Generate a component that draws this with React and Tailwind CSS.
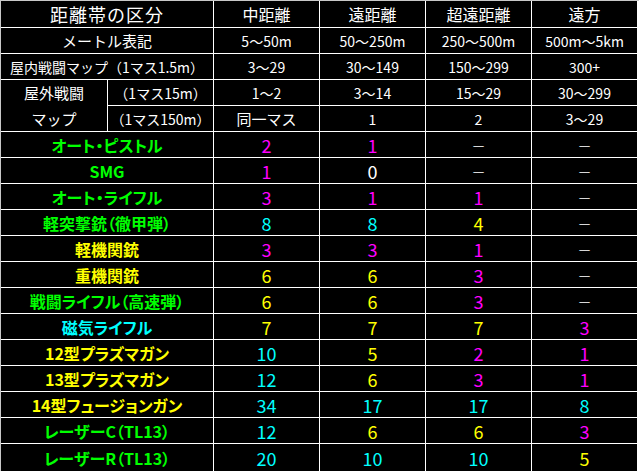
const G = 'text-[#00ff00]';
const Y = 'text-[#ffff00]';
const M = 'text-[#ff00ff]';
const C = 'text-[#00ffff]';
const W = 'text-white';

const weapons = [
  { name: 'オート・ピストル', color: G, vals: [['2', M], ['1', M], ['—', W], ['—', W]] },
  { name: 'SMG', color: G, vals: [['1', M], ['0', W], ['—', W], ['—', W]] },
  { name: 'オート・ライフル', color: G, vals: [['3', M], ['1', M], ['1', M], ['—', W]] },
  { name: '軽突撃銃（徹甲弾）', color: G, vals: [['8', C], ['8', C], ['4', Y], ['—', W]] },
  { name: '軽機関銃', color: Y, vals: [['3', M], ['3', M], ['1', M], ['—', W]] },
  { name: '重機関銃', color: Y, vals: [['6', Y], ['6', Y], ['3', M], ['—', W]] },
  { name: '戦闘ライフル（高速弾）', color: G, vals: [['6', Y], ['6', Y], ['3', M], ['—', W]] },
  { name: '磁気ライフル', color: C, vals: [['7', Y], ['7', Y], ['7', Y], ['3', M]] },
  { name: '12型プラズマガン', color: Y, vals: [['10', C], ['5', Y], ['2', M], ['1', M]] },
  { name: '13型プラズマガン', color: Y, vals: [['12', C], ['6', Y], ['3', M], ['1', M]] },
  { name: '14型フュージョンガン', color: Y, vals: [['34', C], ['17', C], ['17', C], ['8', C]] },
  { name: 'レーザーC（TL13）', color: G, vals: [['12', C], ['6', Y], ['6', Y], ['3', M]] },
  { name: 'レーザーR（TL13）', color: G, vals: [['20', C], ['10', C], ['10', C], ['5', Y]] },
];

function Cell({ className = '', children }) {
  return (
    <div className={'bg-black flex items-center justify-center leading-none whitespace-nowrap ' + className}>
      {children}
    </div>
  );
}

export default function App() {
  return (
    <div
      className="w-[639px] h-[471px] bg-white border-t border-l border-[#c8c8c8] overflow-hidden"
      style={{ fontFamily: '"Noto Sans CJK JP", "Noto Sans", sans-serif' }}
    >
      <div className="w-[636px] grid grid-cols-[106px_105px_105px_105px_105px_105px] grid-rows-[26px_repeat(16,25px)_27px] gap-px">
        {/* header */}
        <Cell className="col-span-2 text-[18px] text-white tracking-[1px]">距離帯の区分</Cell>
        <Cell className="text-[16px] text-white">中距離</Cell>
        <Cell className="text-[16px] text-white">遠距離</Cell>
        <Cell className="text-[16px] text-white">超遠距離</Cell>
        <Cell className="text-[16px] text-white">遠方</Cell>

        <Cell className="col-span-2 text-[15px] text-white">メートル表記</Cell>
        <Cell className="text-[14px] text-white">5〜50m</Cell>
        <Cell className="text-[14px] text-white">50〜250m</Cell>
        <Cell className="text-[14px] text-white">250〜500m</Cell>
        <Cell className="text-[14px] text-white">500m〜5km</Cell>

        <Cell className="col-span-2 text-[14px] text-white">屋内戦闘マップ（1マス1.5m）</Cell>
        <Cell className="text-[14px] text-white">3〜29</Cell>
        <Cell className="text-[14px] text-white">30〜149</Cell>
        <Cell className="text-[14px] text-white">150〜299</Cell>
        <Cell className="text-[14px] text-white">300+</Cell>

        <div className="row-span-2 bg-black flex flex-col text-[15px] text-white leading-none">
          <div className="h-[25px] flex items-center justify-center">屋外戦闘</div>
          <div className="h-px" />
          <div className="h-[25px] flex items-center justify-center">マップ</div>
        </div>
        <Cell className="text-[14px] text-white">（1マス15m）</Cell>
        <Cell className="text-[14px] text-white">1〜2</Cell>
        <Cell className="text-[14px] text-white">3〜14</Cell>
        <Cell className="text-[14px] text-white">15〜29</Cell>
        <Cell className="text-[14px] text-white">30〜299</Cell>

        <Cell className="text-[14px] text-white">（1マス150m）</Cell>
        <Cell className="text-[15px] text-white">同一マス</Cell>
        <Cell className="text-[14px] text-white">1</Cell>
        <Cell className="text-[14px] text-white">2</Cell>
        <Cell className="text-[14px] text-white">3〜29</Cell>

        {weapons.map((w) => (
          <div key={w.name} className="contents">
            <Cell className={'col-span-2 text-[16px] font-bold [font-feature-settings:"palt"] ' + w.color}>
              {w.name}
            </Cell>
            {w.vals.map(([v, c], i) => (
              <Cell key={i} className={(v === '—' ? 'text-[13px] ' : 'text-[18px] ') + c}>
                {v}
              </Cell>
            ))}
          </div>
        ))}
      </div>
    </div>
  );
}
